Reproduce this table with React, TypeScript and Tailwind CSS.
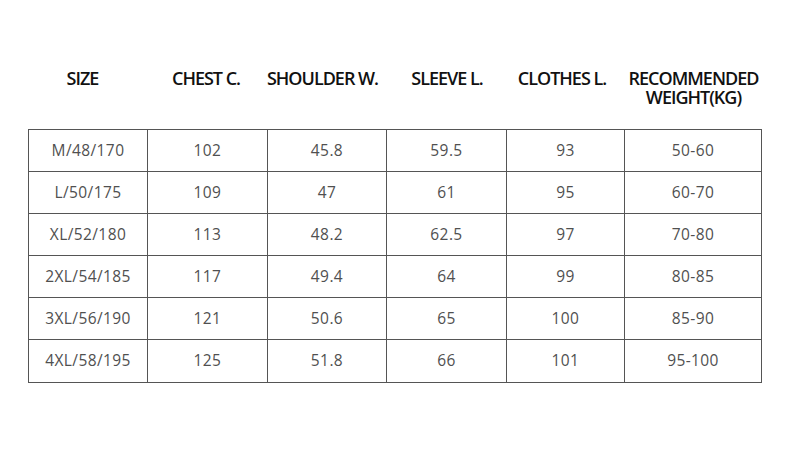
const headers: { lines: string[]; shift: string }[] = [
  { lines: ["SIZE"], shift: "-translate-x-[6px]" },
  { lines: ["CHEST C."], shift: "-translate-x-[2px]" },
  { lines: ["SHOULDER W."], shift: "-translate-x-[5px]" },
  { lines: ["SLEEVE L."], shift: "translate-x-0" },
  { lines: ["CLOTHES L."], shift: "-translate-x-[4px]" },
  { lines: ["RECOMMENDED", "WEIGHT(KG)"], shift: "translate-x-0" },
];

const rows: string[][] = [
  ["M/48/170", "102", "45.8", "59.5", "93", "50-60"],
  ["L/50/175", "109", "47", "61", "95", "60-70"],
  ["XL/52/180", "113", "48.2", "62.5", "97", "70-80"],
  ["2XL/54/185", "117", "49.4", "64", "99", "80-85"],
  ["3XL/56/190", "121", "50.6", "65", "100", "85-90"],
  ["4XL/58/195", "125", "51.8", "66", "101", "95-100"],
];

const cols = "grid grid-cols-[119px_120px_119px_120px_118px_137px]";

export default function App() {
  return (
    <div className="w-[790px] h-[470px] bg-white overflow-hidden">
      {/* header labels */}
      <div className={`${cols} ml-[29px] pt-[69px] h-[129px]`}>
        {headers.map((h, i) => (
          <p
            key={i}
            className={`text-center text-[18px] leading-[19px] font-semibold tracking-[-1px] text-[#111] font-['Open_Sans',sans-serif] ${h.shift}`}
          >
            {h.lines[0]}
            {h.lines[1] && (
              <>
                <br />
                {h.lines[1]}
              </>
            )}
          </p>
        ))}
      </div>

      {/* size table */}
      <div className="ml-[28px] w-[734px] border-l border-t border-[#555]">
        {rows.map((row, r) => (
          <div key={r} className={cols}>
            {row.map((cell, c) => (
              <div
                key={c}
                className={`flex items-center justify-center border-r border-b border-[#555] text-[15.5px] tracking-[0.4px] text-[#505050] font-['Open_Sans',sans-serif] ${
                  r === rows.length - 1 ? "h-[43px]" : "h-[42px]"
                }`}
              >
                {cell}
              </div>
            ))}
          </div>
        ))}
      </div>
    </div>
  );
}
